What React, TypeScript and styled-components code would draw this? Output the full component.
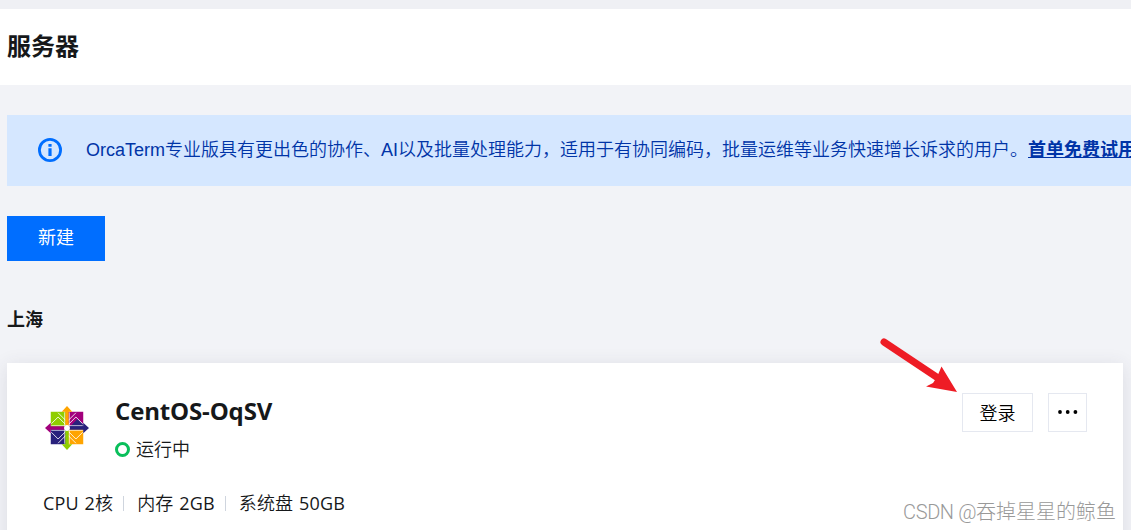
import styled, { createGlobalStyle } from 'styled-components';

interface ISpec {
	label: string;
	value: string;
}

const specs: ISpec[] = [
	{ label: 'CPU', value: '2核' },
	{ label: '内存', value: '2GB' },
	{ label: '系统盘', value: '50GB' },
];

const InfoIcon = () => (
	<svg width='24' height='24' viewBox='0 0 24 24' fill='none'>
		<circle cx='12' cy='12' r='10.6' stroke='#006eff' strokeWidth='2.8' />
		<path d='M10.4 6h3.2v2.8h-3.2zM10.4 10.2h3.2V18h-3.2z' fill='#006eff' />
	</svg>
);

// one arm of the logo, pointing up from the centre
const ARM = 'M19.4 19V5.5H16L21 0l5 5.5H22.6V19z';

const CentosLogo = () => (
	<svg width='44' height='44' viewBox='0 0 42 42'>
		<path d='M5.5 5.5h15v15h-15z' fill='#8fce00' />
		<path d='M21.5 5.5h15v15h-15z' fill='#a2007c' />
		<path d='M5.5 21.5h15v15h-15z' fill='#29217c' />
		<path d='M21.5 21.5h15v15h-15z' fill='#ffa400' />
		<path d='M23 20.5l8-8 5.5 5v3z' fill='#29217c' />
		<g stroke='#fff' strokeWidth='0.8' fill='none'>
			<path d='M18.9 6v13M23.1 6v13M18.9 36V23M23.1 36V23' />
			<path d='M6 18.9h13M6 23.1h13M36 18.9H23M36 23.1H23' />
			<path d='M6 17L12.5 10.5 20 18M12.5 6.5L20 14' />
			<path d='M36 17L29.5 10.5 22 18M29.5 6.5L22 14' />
			<path d='M6 25l6.5 6.5L20 24M12.5 35.5L20 28' />
			<path d='M36 25l-6.5 6.5L22 24M29.5 35.5L22 28' />
		</g>
		<path d={ARM} fill='#ffa400' />
		<path d={ARM} fill='#29217c' transform='rotate(90 21 21)' />
		<path d={ARM} fill='#8fce00' transform='rotate(180 21 21)' />
		<path d={ARM} fill='#a2007c' transform='rotate(270 21 21)' />
		<circle cx='21' cy='21' r='2.8' fill='#fff' />
	</svg>
);

const App = () => {
	return (
		<Page>
			<GlobalStyle />
			<Header>
				<h1>服务器</h1>
			</Header>
			<Content>
				<Notice>
					<InfoIcon />
					<p>
						OrcaTerm专业版具有更出色的协作、AI以及批量处理能力，适用于有协同编码，批量运维等业务快速增长诉求的用户。
						<a href='#trial'>首单免费试用</a>
					</p>
				</Notice>
				<CreateButton type='button'>新建</CreateButton>
				<Region>上海</Region>
				<Card>
					<CardTop>
						<CentosLogo />
						<Summary>
							<h3>CentOS-OqSV</h3>
							<Status>运行中</Status>
						</Summary>
						<Actions>
							<ActionButton type='button' $width={71}>
								登录
							</ActionButton>
							<ActionButton type='button' $width={39} aria-label='more'>
								<svg width='20' height='4' viewBox='0 0 20 4'>
									<circle cx='2' cy='2' r='1.9' />
									<circle cx='9.7' cy='2' r='1.9' />
									<circle cx='17.4' cy='2' r='1.9' />
								</svg>
							</ActionButton>
						</Actions>
					</CardTop>
					<Specs>
						{specs.map((spec) => (
							<li key={spec.label}>
								{spec.label} {spec.value}
							</li>
						))}
					</Specs>
				</Card>
			</Content>
			<Arrow width='78' height='58' viewBox='0 0 78 58'>
				<path d='M5 6L62 44' stroke='#ee1c25' strokeWidth='7' strokeLinecap='round' />
				<path d='M78 56L62.5 30.5 58 41 54 47 47 50.5z' fill='#ee1c25' />
			</Arrow>
			<Watermark>
				<span>CSDN @</span>吞掉星星的鲸鱼
			</Watermark>
		</Page>
	);
};

const GlobalStyle = createGlobalStyle`
	*,
	*::before {
		box-sizing: border-box;
		margin: 0;
		padding: 0;
	}

	body {
		background: #f2f3f7;
		color: #16181a;
		font-family: 'Open Sans', 'Noto Sans CJK SC', sans-serif;
		font-size: 18px;
		overflow: hidden;
	}
`;

const Page = styled.main`
	position: relative;
	width: 100%;
	height: 530px;
	padding-top: 9px;
	overflow: hidden;
	background: linear-gradient(#eff0f4, #eff0f4 9px, #f2f3f7 9px);
`;

const Header = styled.header`
	display: flex;
	align-items: center;
	height: 76px;
	padding: 0 0 2px 7px;
	background: #fff;

	h1 {
		font-size: 24px;
		line-height: 36px;
		font-weight: 700;
	}
`;

const Content = styled.section`
	display: flex;
	flex-direction: column;
	align-items: flex-start;
	padding: 30px 8px 0 7px;
`;

const Notice = styled.div`
	display: flex;
	align-items: center;
	gap: 24px;
	width: 1200px;
	height: 71px;
	padding: 0 31px 1px;
	background: #d5e7ff;
	color: #0034a7;

	p {
		font-family: 'Liberation Sans', 'Noto Sans CJK SC', sans-serif;
		font-weight: 350;
		line-height: 28px;
		white-space: nowrap;
	}

	a {
		color: inherit;
		font-weight: 700;
	}
`;

const CreateButton = styled.button`
	width: 98px;
	height: 45px;
	margin-top: 30px;
	padding: 0 0 5px;
	border: none;
	background: #006eff;
	color: #fff;
	font: inherit;
	cursor: pointer;
`;

const Region = styled.h2`
	margin-top: 44px;
	font-size: 18px;
	line-height: 28px;
	font-weight: 700;
`;

const Card = styled.article`
	width: 100%;
	height: 220px;
	margin-top: 30px;
	padding: 30px 36px;
	background: #fff;
	box-shadow: 0 3px 18px rgba(54, 58, 80, 0.12);
`;

const CardTop = styled.div`
	display: flex;
	align-items: flex-start;

	> svg {
		margin: 13px 0 0 2px;
	}
`;

const Summary = styled.div`
	flex: 1;
	margin-left: 26px;

	h3 {
		font-size: 24px;
		line-height: 36px;
		font-weight: 700;
		letter-spacing: -0.15px;
	}
`;

const Status = styled.p`
	display: flex;
	align-items: center;
	gap: 6px;
	margin-top: 6px;
	line-height: 28px;
	font-weight: 350;

	&::before {
		content: '';
		width: 15px;
		height: 15px;
		border: 3px solid #0abf5b;
		border-radius: 50%;
	}
`;

const Actions = styled.div`
	display: flex;
	gap: 15px;
`;

const ActionButton = styled.button<{ $width: number }>`
	display: flex;
	align-items: center;
	justify-content: center;
	width: ${({ $width }) => $width}px;
	height: 39px;
	padding-bottom: 1px;
	border: 1px solid #e5e8f0;
	background: #fff;
	color: #000;
	font: inherit;
	font-weight: 350;
	cursor: pointer;
`;

const Specs = styled.ul`
	display: flex;
	margin-top: 26px;
	list-style: none;
	font-family: 'Open Sans', 'Noto Sans CJK SC DemiLight', 'Noto Sans CJK SC', sans-serif;
	line-height: 28px;
	font-weight: 400;
	letter-spacing: 0.15px;
	word-spacing: 1px;

	li {
		display: flex;
		align-items: center;
		white-space: pre;
	}

	li + li::before {
		content: '';
		width: 1px;
		height: 15px;
		margin: 0 13px 0 10px;
		background: #cfd5de;
	}
`;

const Arrow = styled.svg`
	position: absolute;
	top: 336px;
	left: 879px;
	fill: none;
`;

const Watermark = styled.span`
	position: absolute;
	right: 15px;
	bottom: 4px;
	color: #999;
	font-family: Roboto, 'Noto Sans CJK SC', sans-serif;
	font-size: 20px;
	line-height: 28px;
	font-weight: 300;

	span {
		letter-spacing: -0.4px;
	}
`;

export default App;
